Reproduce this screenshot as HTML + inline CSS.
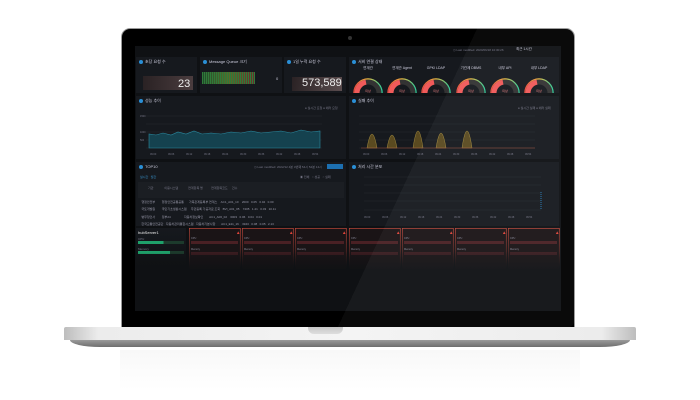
<!DOCTYPE html>
<html><head><meta charset="utf-8"><style>
*{margin:0;padding:0;box-sizing:border-box}
body{width:700px;height:400px;background:#fff;position:relative;overflow:hidden;font-family:"Liberation Sans","Noto Sans CJK KR",sans-serif;color:#aab}
.a{position:absolute}
.p{position:absolute;background:#16191e;}
.t{position:absolute;font-size:4px;color:#ccd;white-space:nowrap}
.dot{display:inline-block;width:4px;height:4px;border-radius:50%;background:#2a8fd6;margin-right:2px;vertical-align:middle}
.s{font-size:3px;color:#778;position:absolute;white-space:nowrap}
</style></head><body>
<!-- reflection -->
<div class="a" style="left:120px;top:350px;width:460px;height:40px;background:linear-gradient(#f8f8f8,#fff)"></div>
<!-- lid -->
<div class="a" style="left:121px;top:28px;width:454px;height:301px;background:#000;border-radius:9px 9px 2px 2px;border:1px solid #9a9a9a"></div>
<div class="a" style="left:348px;top:36px;width:4px;height:4px;border-radius:50%;background:#333"></div>
<!-- screen -->
<div class="a" style="left:135px;top:46px;width:426px;height:265px;background:#0f1114"></div>
<!-- top bar -->
<div class="s" style="left:453px;top:48px">◷ Last modified: 2020/06/18 10:30:26</div>
<div class="t" style="left:516px;top:47px;font-size:3.5px">최근 1시간</div>
<!-- row1 -->
<div class="p" style="left:136px;top:57px;width:61px;height:36px"></div>
<div class="t" style="left:139px;top:59px"><span class="dot"></span>초당 요청 수</div>
<div class="a" style="left:143px;top:76px;width:50px;height:14px;background:linear-gradient(90deg,#2a2224,#4a3c3e)"></div>
<div class="t" style="left:178px;top:78px;font-size:11px;color:#eee">23</div>
<div class="p" style="left:200px;top:57px;width:82px;height:36px"></div>
<div class="t" style="left:203px;top:59px"><span class="dot"></span>Message Queue 크기</div>
<div class="a" style="left:202px;top:72px;width:53px;height:12px;background:repeating-linear-gradient(90deg,#2f7a3a 0 1px,transparent 1px 2px),linear-gradient(90deg,#1d4a2a,#5a6a2a,#6a2a2a)"></div>
<div class="t" style="left:276px;top:76px">0</div>
<div class="p" style="left:284px;top:57px;width:62px;height:36px"></div>
<div class="t" style="left:287px;top:59px"><span class="dot"></span>1일 누적 요청 수</div>
<div class="a" style="left:292px;top:77px;width:50px;height:14px;background:linear-gradient(100deg,#2a2224,#5a4c4e)"></div>
<div class="t" style="left:302px;top:77px;font-size:11px;color:#eee">573,589</div>
<div class="p" style="left:349px;top:57px;width:210px;height:36px"></div>
<div class="t" style="left:352px;top:59px"><span class="dot"></span>서비 연결 상태</div>
<svg class="a" style="left:349px;top:64px" width="210" height="30">
<defs><linearGradient id="g" x1="0" x2="1"><stop offset="0" stop-color="#e74c3c"/><stop offset=".5" stop-color="#e6b840"/><stop offset="1" stop-color="#2ecc9a"/></linearGradient></defs>
<g font-size="3.5" fill="#ccd" text-anchor="middle">
<text x="19" y="5">연계관</text><text x="53" y="5">연계관 Agent</text><text x="87" y="5">GPKI LDAP</text><text x="122" y="5">기관제 DBMS</text><text x="156" y="5">내부 API</text><text x="190" y="5">내부 LDAP</text></g>
<g id="gg"><path d="M5 29 A14 14 0 0 1 33 29" fill="none" stroke="url(#g)" stroke-width="1.5"/><path d="M8 29 A11 11 0 0 1 30 29" fill="none" stroke="#333" stroke-width="5"/><path d="M8 29 A11 11 0 0 1 17 18.2" fill="none" stroke="#f05a5a" stroke-width="5"/><text x="19" y="28" font-size="3" fill="#f08080" text-anchor="middle">미상</text></g>
<use href="#gg" x="34"/><use href="#gg" x="68"/><use href="#gg" x="103"/><use href="#gg" x="137"/><use href="#gg" x="171"/>
</svg>
<!-- row2 -->
<div class="p" style="left:136px;top:96px;width:210px;height:63px"></div>
<div class="t" style="left:139px;top:98px"><span class="dot"></span>성능 추이</div>
<div class="s" style="left:305px;top:106px">● 실시간 요청 ● 에러 요청</div>
<svg class="a" style="left:136px;top:110px" width="210" height="48">
<g stroke="#2a2f36" stroke-width=".4"><line x1="10" y1="6" x2="186" y2="6"/><line x1="10" y1="14" x2="186" y2="14"/><line x1="10" y1="22" x2="186" y2="22"/><line x1="10" y1="30" x2="186" y2="30"/><line x1="10" y1="38" x2="186" y2="38"/></g>
<path d="M13 38 L13 24 L20 25 L27 23 L35 25 L42 22 L50 24 L58 21 L66 24 L75 23 L85 24 L95 22 L105 23 L115 21 L125 23 L135 22 L145 21 L155 23 L165 20 L175 22 L184 21 L184 38Z" fill="#15424f" stroke="#2b8aa0" stroke-width=".6"/>
<g font-size="2.5" fill="#778"><text x="4" y="7">1500</text><text x="4" y="23">1000</text><text x="4" y="31">500</text>
<text x="14" y="45">09:00</text><text x="32" y="45">09:06</text><text x="50" y="45">09:12</text><text x="68" y="45">09:18</text><text x="86" y="45">09:24</text><text x="104" y="45">09:30</text><text x="122" y="45">09:36</text><text x="140" y="45">09:42</text><text x="158" y="45">09:48</text><text x="176" y="45">09:54</text></g>
</svg>
<div class="p" style="left:349px;top:96px;width:210px;height:63px"></div>
<div class="t" style="left:352px;top:98px"><span class="dot"></span>실패 추이</div>
<div class="s" style="left:518px;top:106px">● 실시간 실패 ● 에러 실패</div>
<svg class="a" style="left:349px;top:110px" width="210" height="48">
<g stroke="#2a2f36" stroke-width=".4"><line x1="10" y1="6" x2="186" y2="6"/><line x1="10" y1="14" x2="186" y2="14"/><line x1="10" y1="22" x2="186" y2="22"/><line x1="10" y1="30" x2="186" y2="30"/><line x1="10" y1="38" x2="186" y2="38"/></g>
<g fill="#5a4a20" stroke="#a08a40" stroke-width=".5">
<path d="M18 38 Q23 10 28 38Z"/><path d="M38 38 Q43 12 48 38Z"/><path d="M64 38 Q69 4 74 38Z"/><path d="M87 38 Q92 8 97 38Z"/><path d="M113 38 Q118 4 123 38Z"/></g>
<line x1="12" y1="38" x2="186" y2="38" stroke="#a0503a" stroke-width=".5"/>
<g font-size="2.5" fill="#778"><text x="14" y="45">09:00</text><text x="32" y="45">09:06</text><text x="50" y="45">09:12</text><text x="68" y="45">09:18</text><text x="86" y="45">09:24</text><text x="104" y="45">09:30</text><text x="122" y="45">09:36</text><text x="140" y="45">09:42</text><text x="158" y="45">09:48</text><text x="176" y="45">09:54</text></g>
</svg>
<!-- row3 -->
<div class="p" style="left:136px;top:162px;width:210px;height:64px"></div>
<div class="t" style="left:139px;top:164px"><span class="dot"></span>TOP10</div>
<div class="s" style="left:254px;top:165px">◷ Last modified: 2022/12 4분 3번째 54시 54분 14시</div>
<div class="a" style="left:327px;top:164px;width:16px;height:5px;background:#1c6fb0"></div>
<div class="s" style="left:140px;top:175px;color:#3a9ad6">실시간 &#160; 월간</div>
<div class="s" style="left:300px;top:175px">◉ 전체 &#160; ○ 성공 &#160; ○ 실패</div>
<div class="a" style="left:138px;top:182px;width:206px;height:16px;background:#1b1e23"></div>
<div class="s" style="left:148px;top:186px">기관 &#160;&#160;&#160;&#160;&#160;&#160;&#160;&#160;&#160;&#160;&#160; 이용시스템 &#160;&#160;&#160;&#160;&#160;&#160;&#160;&#160;&#160;&#160; 연계항목 명 &#160;&#160;&#160;&#160;&#160;&#160;&#160;&#160; 연계항목코드 &#160;&#160;&#160; 건수</div>
<div class="s" style="left:138px;top:199px;line-height:7.3px;color:#99a">&#160;&#160;&#160; 행정안전부 &#160;&#160;&#160;&#160;&#160;&#160; 행정안전공통공통 &#160;&#160;&#160;&#160; 가족관계등록부 연계스 &#160;&#160; AC1_A01_10 &#160;&#160; 2000 &#160; 0.05 &#160; 0.04 &#160; 0.00<br>&#160;&#160;&#160; 국토개발원 &#160;&#160;&#160;&#160;&#160;&#160; 국민기초생활시스템 &#160;&#160;&#160; 주민등록 가공자료 조회 &#160; BVI_A01_05 &#160;&#160; 7405 &#160; 1.41 &#160; 0.03 &#160; 10.11<br>&#160;&#160;&#160; 병무청인사 &#160;&#160;&#160;&#160;&#160;&#160; 정부24 &#160;&#160;&#160;&#160;&#160;&#160;&#160;&#160;&#160;&#160;&#160;&#160;&#160;&#160; 자동차정보확인 &#160;&#160;&#160;&#160;&#160; AC1_A06_02 &#160;&#160; 6003 &#160; 0.06 &#160; 0.04 &#160; 0.01<br>&#160;&#160;&#160; 한국교통안전공단 &#160; 자동차관리통합시스템 &#160; 자동차기본사항 &#160;&#160;&#160;&#160;&#160; AC1_E11_16 &#160;&#160; 3943 &#160; 0.08 &#160; 0.05 &#160; 2.13</div>
<div class="p" style="left:349px;top:162px;width:210px;height:64px"></div>
<div class="t" style="left:352px;top:164px"><span class="dot"></span>처리 시간 분포</div>
<svg class="a" style="left:349px;top:170px" width="210" height="56">
<g stroke="#2a2f36" stroke-width=".4"><line x1="15" y1="7" x2="192" y2="7"/><line x1="15" y1="15" x2="192" y2="15"/><line x1="15" y1="23" x2="192" y2="23"/><line x1="15" y1="31" x2="192" y2="31"/><line x1="15" y1="40" x2="192" y2="40"/></g>
<line x1="192" y1="22" x2="192" y2="40" stroke="#2a8fd6" stroke-width=".8" stroke-dasharray="1 1"/>
<g font-size="2.5" fill="#778"><text x="15" y="48">09:00</text><text x="33" y="48">09:06</text><text x="51" y="48">09:12</text><text x="69" y="48">09:18</text><text x="87" y="48">09:24</text><text x="105" y="48">09:30</text><text x="123" y="48">09:36</text><text x="141" y="48">09:42</text><text x="159" y="48">09:48</text><text x="177" y="48">09:54</text></g>
</svg>
<!-- row4 -->
<div class="p" style="left:136px;top:228px;width:50px;height:40px;background:linear-gradient(#16191e,#0f1114)"></div>
<div class="t" style="left:138px;top:230px;color:#eee">hubServer1</div>
<div class="s" style="left:138px;top:237px">CPU</div>
<div class="a" style="left:138px;top:241px;width:46px;height:3px;background:linear-gradient(90deg,#1fa06a 55%,#1c3a2c 55%)"></div>
<div class="s" style="left:138px;top:247px">Memory</div>
<div class="a" style="left:138px;top:251px;width:46px;height:3px;background:linear-gradient(90deg,#1fa06a 70%,#1c3a2c 70%)"></div>
<svg class="a" style="left:189px;top:228px" width="372" height="42">
<defs><linearGradient id="fd" x1="0" y1="0" x2="0" y2="1"><stop offset="0" stop-color="#c84a3c"/><stop offset="1" stop-color="#0f1114"/></linearGradient>
<g id="c"><rect x=".3" y=".3" width="51" height="41" fill="#1a1416" stroke="url(#fd)" stroke-width=".7"/><text x="47" y="6" font-size="4.5" fill="#e0453a">▲</text><text x="2" y="11" font-size="2.5" fill="#889">CPU</text><rect x="2" y="13" width="47" height="3" fill="#4a2024"/><text x="2" y="22" font-size="2.5" fill="#889">Memory</text><rect x="2" y="24" width="47" height="3" fill="#3a1c20"/></g></defs>
<use href="#c"/><use href="#c" x="53"/><use href="#c" x="106"/><use href="#c" x="160"/><use href="#c" x="213"/><use href="#c" x="266"/><use href="#c" x="319"/>
</svg>
<div class="a" style="left:135px;top:252px;width:426px;height:20px;background:linear-gradient(rgba(15,17,20,0),#0f1114)"></div>
<!-- glare -->
<div class="a" style="left:121px;top:28px;width:454px;height:300px;border-radius:9px;background:linear-gradient(115deg,transparent 60%,rgba(255,255,255,.04) 60%);pointer-events:none"></div>
<!-- base -->
<div class="a" style="left:64px;top:327px;width:572px;height:13px;background:linear-gradient(90deg,#bdbdbd,#ececec 6%,#f4f4f4 50%,#ececec 94%,#bdbdbd);border-radius:2px 2px 0 0"></div>
<div class="a" style="left:70px;top:340px;width:560px;height:7px;background:linear-gradient(#9a9a9a,#6e6e6e);border-radius:0 0 30px 30px/0 0 7px 7px"></div>
<div class="a" style="left:308px;top:327px;width:35px;height:7px;background:linear-gradient(#c8c8c8,#dedede);border-radius:0 0 6px 6px"></div>
</body></html>
